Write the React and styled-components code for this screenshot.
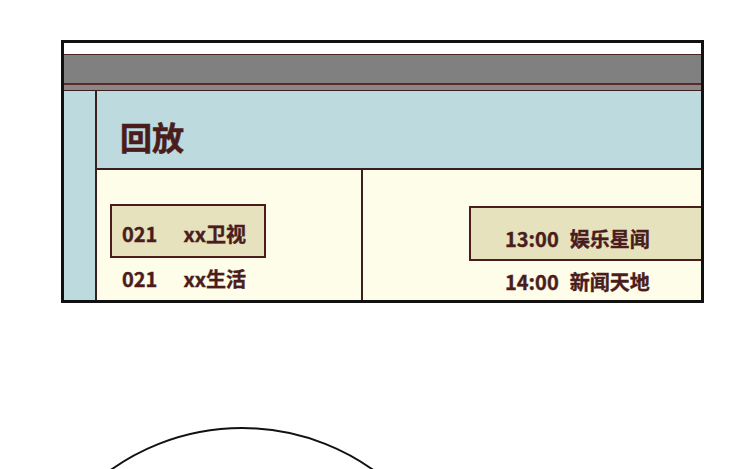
import React from 'react'
import styled, { createGlobalStyle } from 'styled-components'

const INK = '#4a1c1c'
const LINE = '#3a1f1f'

const CHANNELS = [
  { id: 1, code: '021', name: 'xx卫视', active: true },
  { id: 2, code: '021', name: 'xx生活' },
]

const PROGRAMS = [
  { id: 1, time: '13:00', title: '娱乐星闻', active: true },
  { id: 2, time: '14:00', title: '新闻天地' },
]

const GlobalStyle = createGlobalStyle`
  html, body {
    margin: 0;
    padding: 0;
    background: #ffffff;
    overflow: hidden;
  }
  body {
    font-family: "Noto Sans CJK SC", "Noto Sans", sans-serif;
  }
`

const Page = styled.div`
  width: 750px;
  height: 469px;
  padding-top: 40px;
  box-sizing: border-box;
  overflow: hidden;
`

const Screen = styled.div`
  margin-left: 61px;
  width: 643px;
  height: 263px;
  box-sizing: border-box;
  border: 3px solid #111111;
  display: flex;
  flex-direction: column;
  overflow: hidden;
  background: #ffffff;
`

const TopGap = styled.div`
  height: 11px;
  flex: none;
`

const TitleBar = styled.div`
  flex: none;
  height: 28px;
  background: #808080;
  border-top: 1px solid #4a2424;
  border-bottom: 2px solid #5a2a2a;
`

const SubBar = styled.div`
  flex: none;
  height: 5px;
  background: #8e8686;
  border-bottom: 1px solid ${LINE};
`

const Body = styled.div`
  flex: 1;
  display: flex;
  min-height: 0;
`

const Sidebar = styled.div`
  width: 31px;
  flex: none;
  background: #bddbde;
  border-right: 2px solid ${LINE};
`

const Main = styled.div`
  flex: 1;
  display: flex;
  flex-direction: column;
  min-width: 0;
`

const Header = styled.div`
  flex: none;
  height: 79px;
  box-sizing: border-box;
  padding: 27px 0 0 23px;
  background: #bddbde;
  border-bottom: 2px solid ${LINE};
`

const Title = styled.h1`
  margin: 0;
  font-size: 32px;
  line-height: 36px;
  font-weight: 700;
  color: ${INK};
  -webkit-text-stroke: 0.6px ${INK};
`

const Content = styled.div`
  flex: 1;
  display: grid;
  grid-template-columns: 264px 1fr;
  background: #fefde9;
  min-height: 0;
`

const Column = styled.div`
  display: flex;
  flex-direction: column;
  overflow: hidden;
  padding-top: ${({ $top }) => $top}px;
  padding-left: ${({ $left }) => $left}px;
  border-left: ${({ $divider }) => ($divider ? `2px solid ${LINE}` : 'none')};
`

const Row = styled.div`
  display: flex;
  align-items: center;
  gap: ${({ $gap }) => $gap}px;
  box-sizing: border-box;
  flex: none;
  width: ${({ $width }) => $width}px;
  height: ${({ $height }) => $height}px;
  padding-left: ${({ $pad }) => $pad}px;
  padding-top: ${({ $shift }) => $shift || 0}px;
  border: 2px solid ${({ $active }) => ($active ? INK : 'transparent')};
  background: ${({ $active }) => ($active ? '#e6e2be' : 'transparent')};
  font-size: 20px;
  font-weight: 700;
  color: ${INK};
  -webkit-text-stroke: 0.4px ${INK};
  white-space: nowrap;
`

const Circle = styled.div`
  margin: 124px 0 0 15px;
  width: 454px;
  height: 454px;
  box-sizing: border-box;
  border: 2px solid #111111;
  border-radius: 50%;
`

export default function App() {
  return (
    <Page>
      <GlobalStyle />
      <Screen>
        <TopGap />
        <TitleBar />
        <SubBar />
        <Body>
          <Sidebar />
          <Main>
            <Header>
              <Title>回放</Title>
            </Header>
            <Content>
              <Column $top={34} $left={13}>
                {CHANNELS.map((c) => (
                  <Row
                    key={c.id}
                    $active={c.active}
                    $gap={26}
                    $width={156}
                    $height={c.active ? 54 : 40}
                    $pad={10}
                    $shift={c.active ? 4 : 0}
                  >
                    <span>{c.code}</span>
                    <span>{c.name}</span>
                  </Row>
                ))}
              </Column>
              <Column $top={36} $left={106} $divider>
                {PROGRAMS.map((p) => (
                  <Row
                    key={p.id}
                    $active={p.active}
                    $gap={11}
                    $width={260}
                    $height={p.active ? 55 : 40}
                    $pad={34}
                    $shift={p.active ? 10 : 0}
                  >
                    <span>{p.time}</span>
                    <span>{p.title}</span>
                  </Row>
                ))}
              </Column>
            </Content>
          </Main>
        </Body>
      </Screen>
      <Circle />
    </Page>
  )
}
